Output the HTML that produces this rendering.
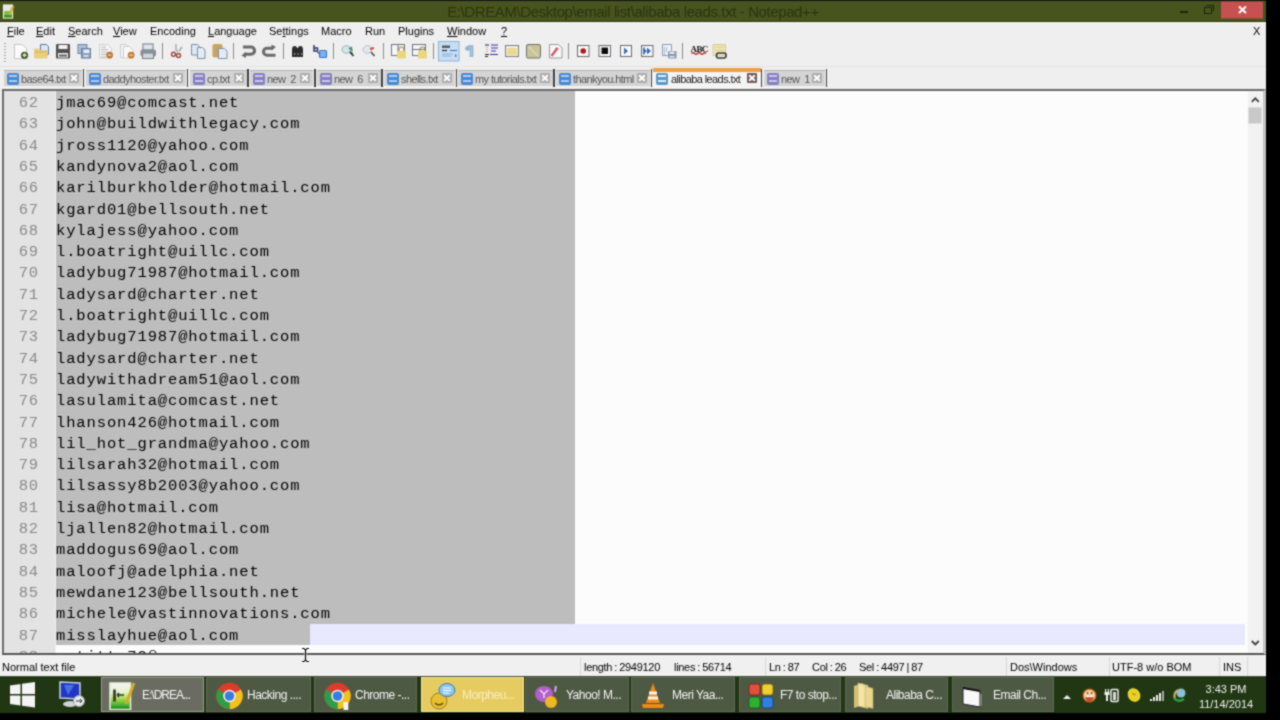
<!DOCTYPE html>
<html><head><meta charset="utf-8">
<style>
*{margin:0;padding:0;box-sizing:border-box}
html,body{width:1280px;height:720px;overflow:hidden;background:#000;font-family:"Liberation Sans",sans-serif}
.a{position:absolute}
#win{position:absolute;left:0;top:0;width:1266px;height:676px;background:#efefef;overflow:hidden}
#title{left:0;top:0;width:1266px;height:23px;background:#48541d;border-top:1px solid #151515;border-bottom:1px solid #f2f6e6;box-shadow:inset 0 -1px 0 #2e3612}
#ttext{left:0;top:2px;width:1266px;text-align:center;color:#2c3210;font-size:15px;letter-spacing:-0.4px}
#menu{left:0;top:22px;width:1266px;height:19px;font-size:11px;color:#000}
#menu span{position:absolute;top:3px}
#menu u{text-decoration:underline}
#tabs{left:0;top:0;width:1266px;height:90px}
.tab{position:absolute;top:70px;height:16px;background:#d4d4d4;border-top:1px solid #b4b4b4;font-size:11px;color:#555;letter-spacing:-0.6px}
.tab.act{top:68px;height:20px;background:#f4f4f4;border-top:4px solid #f0a040;color:#111}
.sep{position:absolute;top:69px;width:1.5px;height:18px;background:#404040}
.tab .ic{position:absolute;left:3px;top:2px;width:12px;height:12px;border-radius:2px;background:#4a88d0}
.tab .ic:before{content:"";position:absolute;left:2px;top:2px;width:8px;height:2px;background:#a9cdf4}
.tab .ic:after{content:"";position:absolute;left:2px;top:7px;width:8px;height:2px;background:#a9cdf4}
.tab .ic.p{background:#8680c0}
.tab .ic.p:before,.tab .ic.p:after{background:#c9c6ec}
.tab.act .ic{background:#5a98c8;top:1px}
.tab.act .ic:before,.tab.act .ic:after{background:#e0eef8}
.tab .tx{position:absolute;left:17px;top:2px;white-space:pre}
.tab.act .tx{top:1px;left:18px;color:#1a1a1a}
.tab .cl{position:absolute;right:3px;top:2px;width:10px;height:10px;background:#acacac;border-radius:1px}
.tab .cl:before,.tab .cl:after{content:"";position:absolute;left:4px;top:1px;width:2px;height:8px;background:#fff;transform:rotate(45deg)}
.tab .cl:after{transform:rotate(-45deg)}
.tab.act .cl{background:#6e5a5a;top:1px;right:4px}
#ed{left:2px;top:89px;width:1264px;height:566px;border-top:2px solid #6a6a6a;border-left:2px solid #6a6a6a;border-bottom:2px solid #555;border-right:3px solid #c4c4c4;background:#fdfcfd;overflow:hidden}
#gut{left:0;top:0;width:52px;height:562px;background:#e3e3e3;border-right:1px solid #f0f0f0}
#sel{left:52px;top:0;width:519px;height:533px;background:#bdbdbd}
#cur{left:52px;top:533px;width:1189px;height:21px;background:#e8e8ff}
#sel2{left:52px;top:533px;width:254px;height:21px;background:#bdbdbd}
#lines{left:0;top:2px;font-family:"Liberation Mono",monospace;font-size:15.5px;letter-spacing:0.88px;line-height:21.3px;white-space:pre}
.ln{position:absolute;left:0;width:35px;text-align:right;color:#8a8a8a}
.lt{position:absolute;left:52px;color:#000}
#sb{left:1243px;top:0;width:16px;height:562px;background:#f2f2f2;border-left:1px solid #fafafa}
#status{left:0;top:655px;width:1266px;height:21px;font-size:11px;color:#000;background:#f0f0f0}
#status span{position:absolute;top:6px;white-space:nowrap}
#status span.w{word-spacing:-0.6px;letter-spacing:-0.3px}
.ssep{position:absolute;top:2px;width:1px;height:19px;background:#d8d8d8}
#task{left:0;top:676px;width:1266px;height:37px;background:#213713;border-top:1px solid #3e4c34}
.ti{position:absolute;top:0px;width:104px;height:35px;background:#4a5240;border:1px solid #646b58;color:#eee;font-size:12px}
.ti span{position:absolute;left:40px;top:10px;white-space:nowrap;letter-spacing:-0.5px}
#root{position:absolute;left:0;top:0;width:1280px;height:720px;background:#000;filter:url(#soft)}
</style></head><body><svg width="0" height="0" style="position:absolute"><filter id="soft" x="0" y="0" width="100%" height="100%" color-interpolation-filters="sRGB"><feConvolveMatrix order="3" kernelMatrix="1 2 1 2 8 2 1 2 1" divisor="20" edgeMode="duplicate"/></filter></svg><div id="root">
<div id="win">
  <div id="title" class="a"><div id="ttext" class="a">E:\DREAM\Desktop\email list\alibaba leads.txt - Notepad++</div>
 <svg class="a" style="left:0;top:-1px" width="1266" height="22" viewBox="0 0 1266 22">
 <rect x="3.5" y="5" width="9" height="13" fill="#e8e4f0" stroke="#f0f4d8" stroke-width="1.2"/><rect x="4.2" y="11" width="7.6" height="6.4" fill="#70c048"/><rect x="4.2" y="15" width="7.6" height="2.4" fill="#3a8a20"/><path d="M9 15l4.5-9" stroke="#c8b030" stroke-width="2.2"/>
 <rect x="1180" y="11" width="8" height="2" fill="#1c2606"/>
 <rect x="1204.5" y="7.5" width="7" height="6" fill="none" stroke="#1c2606"/><path d="M1206.5 5.5h7v6" fill="none" stroke="#1c2606"/>
 <rect x="1221" y="1.5" width="42" height="17" fill="#c75050"/>
 <path d="M1239 6.5l7 6.5M1246 6.5l-7 6.5" stroke="#fff" stroke-width="2"/>
 </svg></div>
  <div id="menu" class="a">
    <span style="left:7px"><u>F</u>ile</span>
    <span style="left:36px"><u>E</u>dit</span>
    <span style="left:68px"><u>S</u>earch</span>
    <span style="left:113px"><u>V</u>iew</span>
    <span style="left:150px">Encoding</span>
    <span style="left:208px"><u>L</u>anguage</span>
    <span style="left:269px">Se<u>t</u>tings</span>
    <span style="left:321px">Macro</span>
    <span style="left:365px">Run</span>
    <span style="left:398px">Plugins</span>
    <span style="left:447px"><u>W</u>indow</span>
    <span style="left:501px"><u>?</u></span>
    <span style="left:1253px">X</span>
  </div>
  <svg class="a" style="left:0;top:0" width="760" height="64" viewBox="0 0 760 64">
<g fill="#a8a8a8"><rect x="4" y="43" width="2" height="1"/><rect x="4" y="46" width="2" height="1"/><rect x="4" y="49" width="2" height="1"/><rect x="4" y="52" width="2" height="1"/><rect x="4" y="55" width="2" height="1"/><rect x="4" y="58" width="2" height="1"/><rect x="4" y="61" width="2" height="1"/></g>
<rect x="162" y="43" width="1" height="16" fill="#8c8c8c"/><rect x="233" y="43" width="1" height="16" fill="#8c8c8c"/><rect x="283" y="43" width="1" height="16" fill="#8c8c8c"/><rect x="333" y="43" width="1" height="16" fill="#8c8c8c"/><rect x="383" y="43" width="1" height="16" fill="#8c8c8c"/><rect x="433" y="43" width="1" height="16" fill="#8c8c8c"/><rect x="568" y="43" width="1" height="16" fill="#8c8c8c"/><rect x="682" y="43" width="1" height="16" fill="#8c8c8c"/>
<!-- new -->
<path d="M14.5 44.5h8l4 4v10h-12z" fill="#fbfbfb" stroke="#c4c4c4"/>
<circle cx="24.5" cy="55.3" r="3.6" fill="#3c5a2c"/><path d="M24.5 53.3v4M22.5 55.3h4" stroke="#d9f0c0" stroke-width="1.4"/>
<!-- open -->
<path d="M40.5 44.5h6l2 2v8h-8z" fill="#dce6f4" stroke="#5a78a8"/>
<path d="M34 48.5h5l1 1.5h7.5v8.5h-13.5z" fill="#e7cf7c"/>
<path d="M35 52h12" stroke="#cdb060"/>
<!-- save -->
<rect x="56" y="44" width="14" height="14.5" rx="1" fill="#505050"/>
<rect x="58.5" y="45" width="9" height="4" fill="#f2f2f2"/>
<rect x="58" y="53" width="10" height="4.5" fill="#f0f0f0"/><rect x="59" y="54.5" width="8" height="2" fill="#606060"/>
<!-- save all -->
<rect x="78" y="44.5" width="9" height="9" fill="#a8c0d8" stroke="#6a88a8"/>
<rect x="81.5" y="48.5" width="9" height="9.5" fill="#86a2c0" stroke="#687e98"/>
<rect x="83.5" y="49.5" width="6" height="3.5" fill="#e6eef6"/><rect x="83.5" y="55" width="5" height="2" fill="#d4dde8"/>
<!-- close -->
<path d="M99.5 44.5h8l4 4v9.5h-12z" fill="#f6f6f6" stroke="#cfcfcf"/>
<path d="M101 47h5M101 49.5h7M101 52h6M101 54.5h5M101 57h5" stroke="#a8a8a8" stroke-width="0.8"/>
<circle cx="109.6" cy="55.1" r="3.4" fill="#b8732c"/><path d="M107.8 55.1h3.6" stroke="#f4d8b0" stroke-width="1.3"/>
<!-- close all -->
<path d="M120.5 44.5h6l2 2v11h-8z" fill="#f4f4f4" stroke="#cdcdcd"/>
<path d="M123.5 46.5h6l4 4v7.5h-10z" fill="#f8f8f8" stroke="#cdcdcd"/>
<circle cx="131.1" cy="55.1" r="3.4" fill="#c27a30"/><path d="M129.3 55.1h3.6" stroke="#f4d8b0" stroke-width="1.3"/>
<!-- print -->
<rect x="143" y="44" width="10" height="6" fill="#dfe6ee" stroke="#707880"/>
<rect x="140.5" y="49.5" width="15.5" height="7" rx="2" fill="#8a9098"/>
<rect x="142.5" y="53" width="11" height="5.5" fill="#d0d6de" stroke="#7a8088"/>
<!-- cut -->
<path d="M176 44v6l2 2M182 47l-3 4" stroke="#a0a0a0" stroke-width="1.3" fill="none"/>
<circle cx="173.5" cy="54.3" r="2" fill="none" stroke="#a04444" stroke-width="1.4"/>
<circle cx="178.5" cy="55.5" r="2" fill="none" stroke="#a04444" stroke-width="1.4"/>
<!-- copy -->
<path d="M191.5 44.5h6l2 2v8.5h-8z" fill="#dde8f4" stroke="#7f8ea2"/>
<path d="M197.5 47.5h5l2.5 2.5v8.5h-7.5z" fill="#e2ecf6" stroke="#7f8ea2"/>
<!-- paste -->
<rect x="212.5" y="44" width="10" height="13.5" rx="2" fill="#c8a462"/>
<path d="M218.5 48.5h6l2.5 2.5v7.5h-8.5z" fill="#e2ecf6" stroke="#8090a4"/>
<!-- undo -->
<path d="M243 47.1h8a3.3 3.3 0 0 1 0 7.1h-6" stroke="#686868" stroke-width="3" fill="none"/>
<path d="M241.5 55.5l4.5-4v6.5z" fill="#686868"/>
<!-- redo -->
<path d="M273 48.2h-6a3.3 3.3 0 0 0 0 7h8.5" stroke="#6a6a6a" stroke-width="3" fill="none"/>
<path d="M276 47l-4.5-2.5v6z" fill="#6a6a6a"/>
<!-- find -->
<path d="M292 50q0-4 2.5-4t2.5 2h1q0-2 2.5-2t2.5 4v7h-11z" fill="#2a2a2a"/>
<path d="M294 54h1.2M297.5 54h1.2M301 54h1.2" stroke="#eee" stroke-width="1"/>
<!-- replace -->
<path d="M314 45v6h3.5v-3h-3" stroke="#2a3a6a" stroke-width="1.5" fill="none"/>
<rect x="319.5" y="50.5" width="7" height="7" rx="1" fill="#7ab4ec" stroke="#3a78c8" stroke-width="1.2"/>
<path d="M317 52l3 2" stroke="#2a3a6a" stroke-width="1"/>
<!-- zoom in -->
<ellipse cx="346.5" cy="49.5" rx="4.5" ry="3.8" fill="#d4e4ec" stroke="#9ab0c0"/>
<path d="M349 50.5l4 2l-1 1.5z" fill="#3a8a50"/><path d="M350 52l3.5 4" stroke="#333" stroke-width="1.8"/>
<path d="M349 49l3 -1.5M351 47l1 4" stroke="#3a8a50" stroke-width="1.6"/>
<!-- zoom out -->
<ellipse cx="367.5" cy="49.5" rx="4.5" ry="3.8" fill="#e4e8ee" stroke="#b8c0cc"/>
<path d="M370 49l4 -1" stroke="#d04a40" stroke-width="2"/><path d="M371 52l3.5 4" stroke="#555" stroke-width="1.8"/>
<!-- sync v -->
<rect x="391.5" y="44.5" width="13" height="11" fill="#f4f6fa" stroke="#6a7480"/>
<path d="M398 45v10" stroke="#6a7480"/>
<rect x="397" y="51" width="9" height="7.5" rx="1" fill="#ecd67a"/>
<path d="M399 51v-1.5a2.5 2.5 0 0 1 5 0v1.5" stroke="#a89040" fill="none" stroke-width="1.2"/>
<!-- sync h -->
<rect x="412.5" y="44.5" width="13" height="11" fill="#f4f6fa" stroke="#6a7480"/>
<path d="M413 49.5h12" stroke="#6a7480"/>
<rect x="418" y="51" width="9" height="7.5" rx="1" fill="#ecd67a"/>
<path d="M420 51v-1.5a2.5 2.5 0 0 1 5 0v1.5" stroke="#a89040" fill="none" stroke-width="1.2"/>
<!-- word wrap pressed -->
<rect x="438.5" y="41.5" width="20.5" height="19.5" fill="#c6def6" stroke="#92b4d6"/>
<rect x="442" y="45.5" width="8" height="2.5" fill="#5a5a5a"/>
<path d="M442 50.5h5" stroke="#222" stroke-width="1.2"/><path d="M450 50.5h7" stroke="#3a6aa8" stroke-width="1"/>
<path d="M442 54h11M442 56h9" stroke="#8ab0d8" stroke-width="1"/>
<path d="M455 54l2 2-2 1z" fill="#3a6aa8"/>
<!-- pilcrow -->
<path d="M468 46h4.5v11M470.5 46v11" stroke="#8cb0d0" stroke-width="1.6" fill="none"/>
<circle cx="467.5" cy="48.5" r="2.3" fill="#8cb0d0"/>
<!-- indent guide -->
<path d="M485 45h4M485 54.5h4M485 56.5h3" stroke="#222" stroke-width="1"/>
<path d="M487 47v6" stroke="#888" stroke-dasharray="1 1"/>
<path d="M491 45h7M491 48h7M491 51h5M490 54.5h8" stroke="#3030a8" stroke-width="1.2"/>
<!-- user defined -->
<rect x="505.5" y="45.5" width="13" height="11" fill="#f0f0e8" stroke="#7a7a7a"/>
<rect x="507" y="48" width="10" height="7" fill="#e8d890"/>
<!-- 30 -->
<rect x="526.5" y="44.5" width="14" height="13.5" rx="1.5" fill="#c8c498" stroke="#6e6e6e"/>
<path d="M529 47l9 9" stroke="#e0dcb8" stroke-width="1.2"/>
<!-- 31 -->
<path d="M549.5 44.5h9l3.5 3.5v10h-12.5z" fill="#f8f8f8" stroke="#9a9a9a"/>
<path d="M551.5 56l6-8" stroke="#d05868" stroke-width="2.4"/><path d="M555.5 48.5h3" stroke="#d05868" stroke-width="1.2"/>
<!-- record -->
<rect x="577.5" y="45.5" width="11.5" height="11" fill="#fafafa" stroke="#6a6a6a"/>
<circle cx="583.2" cy="51" r="2.8" fill="#b01818"/>
<!-- stop -->
<rect x="599" y="45.5" width="11.5" height="11" fill="#fafafa" stroke="#6a6a6a"/>
<rect x="601.5" y="47.5" width="6.5" height="6.5" fill="#0a0a0a"/>
<!-- play -->
<rect x="620.5" y="45.5" width="11" height="11" fill="#f6f8fc" stroke="#6a6a6a"/>
<path d="M624 47.5l4 3.5-4 3.5z" fill="#3a6ab8"/>
<!-- play multi -->
<rect x="641.5" y="45.5" width="11.5" height="11" fill="#f6f8fc" stroke="#6a6a6a"/>
<path d="M643 47.5l4 3.5-4 3.5zM647 47.5l4 3.5-4 3.5z" fill="#3a6ab8"/>
<path d="M644 47v8" stroke="#3a6ab8"/>
<!-- save macro -->
<path d="M662.5 44.5h9v11h-9z" fill="#eef2f8" stroke="#8a9cb4"/>
<path d="M664.5 47v8M666.5 47v5" stroke="#aabcd0"/>
<rect x="668" y="51" width="8.5" height="7.5" rx="1" fill="#8898ac"/>
<rect x="669.5" y="51.5" width="5" height="2.5" fill="#e0e6ee"/><rect x="669.5" y="56" width="5" height="1.5" fill="#e0e6ee"/>
<!-- ABC -->
<text x="690.5" y="51.5" font-family="Liberation Serif" font-weight="bold" font-size="9" fill="#111" letter-spacing="-0.6">ABC</text>
<path d="M691.5 53.5q1.5 -1.5 3 0t3 0t3 0t3 0t2.5 0" stroke="#c03838" stroke-width="1.5" fill="none"/>
<!-- last -->
<path d="M713 44.5h12.5v11h-12.5z" fill="#f0e8b8" stroke="#c8c090" stroke-width="0.8"/>
<path d="M714.5 47h10M714.5 50h10" stroke="#d8cc88"/>
<rect x="716.5" y="53" width="9.5" height="5" rx="2" fill="none" stroke="#303830" stroke-width="1.6"/>
</svg>
  <div id="tabs" class="a">
<div class="a" style="left:0;top:66px;width:1266px;height:1px;background:#e4e4e4"></div>
<div class="tab" style="left:4px;width:78.00px"><div class="ic "></div><div class="tx">base64.txt</div><div class="cl"></div></div>
<div class="sep" style="left:82.75px"></div>
<div class="tab" style="left:86px;width:100.20px"><div class="ic "></div><div class="tx">daddyhoster.txt</div><div class="cl"></div></div>
<div class="sep" style="left:186.95px"></div>
<div class="tab" style="left:190px;width:56.50px"><div class="ic p"></div><div class="tx">cp.txt</div><div class="cl"></div></div>
<div class="sep" style="left:247.25px"></div>
<div class="tab" style="left:250px;width:63.30px"><div class="ic p"></div><div class="tx">new  2</div><div class="cl"></div></div>
<div class="sep" style="left:314.05px"></div>
<div class="tab" style="left:317px;width:63.50px"><div class="ic p"></div><div class="tx">new  6</div><div class="cl"></div></div>
<div class="sep" style="left:381.25px"></div>
<div class="tab" style="left:384px;width:70.80px"><div class="ic "></div><div class="tx">shells.txt</div><div class="cl"></div></div>
<div class="sep" style="left:455.55px"></div>
<div class="tab" style="left:458px;width:94.50px"><div class="ic "></div><div class="tx">my tutorials.txt</div><div class="cl"></div></div>
<div class="sep" style="left:553.25px"></div>
<div class="tab" style="left:556px;width:94.00px"><div class="ic "></div><div class="tx">thankyou.html</div><div class="cl"></div></div>
<div class="sep" style="left:650.75px"></div>
<div class="tab act" style="left:653px;width:107.75px"><div class="ic g"></div><div class="tx">alibaba leads.txt</div><div class="cl"></div></div>
<div class="sep" style="left:760.75px"></div>
<div class="tab" style="left:764px;width:61.20px"><div class="ic p"></div><div class="tx">new  1</div><div class="cl"></div></div>
<div class="sep" style="left:825.95px"></div>
  </div>
</div>
<div id="ed" class="a">
  <div id="gut" class="a"></div>
  <div id="sel" class="a"></div>
  <div id="cur" class="a"></div>
  <div id="sel2" class="a"></div>
  <div id="lines" class="a">
<div class="ln" style="top:0.00px">62</div><div class="lt" style="top:0.00px">jmac69@comcast.net</div>
<div class="ln" style="top:21.30px">63</div><div class="lt" style="top:21.30px">john@buildwithlegacy.com</div>
<div class="ln" style="top:42.60px">64</div><div class="lt" style="top:42.60px">jross1120@yahoo.com</div>
<div class="ln" style="top:63.90px">65</div><div class="lt" style="top:63.90px">kandynova2@aol.com</div>
<div class="ln" style="top:85.20px">66</div><div class="lt" style="top:85.20px">karilburkholder@hotmail.com</div>
<div class="ln" style="top:106.50px">67</div><div class="lt" style="top:106.50px">kgard01@bellsouth.net</div>
<div class="ln" style="top:127.80px">68</div><div class="lt" style="top:127.80px">kylajess@yahoo.com</div>
<div class="ln" style="top:149.10px">69</div><div class="lt" style="top:149.10px">l.boatright@uillc.com</div>
<div class="ln" style="top:170.40px">70</div><div class="lt" style="top:170.40px">ladybug71987@hotmail.com</div>
<div class="ln" style="top:191.70px">71</div><div class="lt" style="top:191.70px">ladysard@charter.net</div>
<div class="ln" style="top:213.00px">72</div><div class="lt" style="top:213.00px">l.boatright@uillc.com</div>
<div class="ln" style="top:234.30px">73</div><div class="lt" style="top:234.30px">ladybug71987@hotmail.com</div>
<div class="ln" style="top:255.60px">74</div><div class="lt" style="top:255.60px">ladysard@charter.net</div>
<div class="ln" style="top:276.90px">75</div><div class="lt" style="top:276.90px">ladywithadream51@aol.com</div>
<div class="ln" style="top:298.20px">76</div><div class="lt" style="top:298.20px">lasulamita@comcast.net</div>
<div class="ln" style="top:319.50px">77</div><div class="lt" style="top:319.50px">lhanson426@hotmail.com</div>
<div class="ln" style="top:340.80px">78</div><div class="lt" style="top:340.80px">lil_hot_grandma@yahoo.com</div>
<div class="ln" style="top:362.10px">79</div><div class="lt" style="top:362.10px">lilsarah32@hotmail.com</div>
<div class="ln" style="top:383.40px">80</div><div class="lt" style="top:383.40px">lilsassy8b2003@yahoo.com</div>
<div class="ln" style="top:404.70px">81</div><div class="lt" style="top:404.70px">lisa@hotmail.com</div>
<div class="ln" style="top:426.00px">82</div><div class="lt" style="top:426.00px">ljallen82@hotmail.com</div>
<div class="ln" style="top:447.30px">83</div><div class="lt" style="top:447.30px">maddogus69@aol.com</div>
<div class="ln" style="top:468.60px">84</div><div class="lt" style="top:468.60px">maloofj@adelphia.net</div>
<div class="ln" style="top:489.90px">85</div><div class="lt" style="top:489.90px">mewdane123@bellsouth.net</div>
<div class="ln" style="top:511.20px">86</div><div class="lt" style="top:511.20px">michele@vastinnovations.com</div>
<div class="ln" style="top:532.50px">87</div><div class="lt" style="top:532.50px">misslayhue@aol.com</div>
<div class="ln" style="top:553.80px">88</div><div class="lt" style="top:553.80px">motitty72@msn.com</div>
  </div>
  <div id="sb" class="a"><svg class="a" style="left:0;top:0" width="16" height="562" viewBox="0 0 16 562"><path d="M3.8 10.8l3.5-3.5 3.5 3.5" stroke="#404040" stroke-width="1.8" fill="none"/><rect x="0.5" y="16.5" width="13" height="16" fill="#c8c8c8"/><path d="M3.8 550l3.5 3.5 3.5-3.5" stroke="#404040" stroke-width="1.8" fill="none"/></svg></div>
</div>
<div id="status" class="a">
  <span style="left:2px">Normal text file</span>
  <div class="ssep" style="left:580px"></div>
  <span class="w" style="left:584px">length : 2949120</span>
  <span class="w" style="left:674px">lines : 56714</span>
  <div class="ssep" style="left:765px"></div>
  <span class="w" style="left:769px">Ln : 87</span>
  <span class="w" style="left:812px">Col : 26</span>
  <span class="w" style="left:859px">Sel : 4497 | 87</span>
  <div class="ssep" style="left:1006px"></div>
  <span style="left:1010px">Dos\Windows</span>
  <div class="ssep" style="left:1109px"></div>
  <span style="left:1112px">UTF-8 w/o BOM</span>
  <div class="ssep" style="left:1219px"></div>
  <span style="left:1223px">INS</span>
  <div class="ssep" style="left:1247px"></div>
</div>
<div id="task" class="a">
<svg class="a" style="left:0;top:-1px" width="100" height="37" viewBox="0 0 100 37">
<path d="M10 9.5l10.5-1.5v10h-10.5z" fill="#f4f4f4"/><path d="M22 7.8l13-1.8v12h-13z" fill="#f4f4f4"/>
<path d="M10 19.5h10.5v10l-10.5-1.5z" fill="#f4f4f4"/><path d="M22 19.5h13v12l-13-1.8z" fill="#f4f4f4"/>
<path d="M60 6l20 1v16l-20-1z" fill="#2038c0" stroke="#c8d0e8" stroke-width="1.5"/><path d="M64 9l10 0l-6 10z" fill="#4a70e8"/>
<ellipse cx="70" cy="28" rx="7" ry="3" fill="#d0d4d8"/><circle cx="79" cy="25" r="5.5" fill="#e8eaec" stroke="#9aa0a6"/><path d="M76 25h6M80 23l2 2-2 2" stroke="#333" fill="none" stroke-width="1"/>
</svg>
<div class="ti" style="left:101px;width:103px;background:#6a6c62;border-color:#9a9c90;color:#f4f4f4"><svg class="a" style="left:6px;top:2px" width="30" height="30" viewBox="0 0 30 30"><defs><linearGradient id="npg" x1="0" y1="0" x2="0" y2="1"><stop offset="0" stop-color="#f4f4f4"/><stop offset="0.35" stop-color="#e8f0d0"/><stop offset="0.6" stop-color="#a8d848"/><stop offset="0.85" stop-color="#40b030"/><stop offset="1" stop-color="#107010"/></linearGradient></defs><rect x="2" y="3" width="20.5" height="26.5" fill="url(#npg)" stroke="#e4ecd8" stroke-width="1.6"/><path d="M6.5 9.5v12" stroke="#303030" stroke-width="2.6"/><path d="M9 15h7M9 15l2-2M9 15l2 2" stroke="#303030" stroke-width="1.3" fill="none"/><path d="M26 3l-8 21" stroke="#d0b020" stroke-width="3"/></svg><span style="letter-spacing:-1px">E:\DREA...</span></div>
<div class="ti" style="left:206px;width:105px;background:#4e5944;border-color:#5e6854;color:#f4f4f4"><svg class="a" style="left:6px;top:2px" width="30" height="30" viewBox="0 0 30 30"><g transform="translate(16.5 16) scale(1.2) translate(-15 -16)"><circle cx="15" cy="16" r="11" fill="#dd3b2b"/><path d="M15 16L24.53 10.5A11 11 0 0 1 15 27Z" fill="#f2c21a"/><path d="M15 16L15 27A11 11 0 0 1 5.47 10.5Z" fill="#2f9d46"/><circle cx="15" cy="16" r="5.2" fill="#f4f4f4"/><circle cx="15" cy="16" r="4" fill="#3b7be0"/></g></svg><span>Hacking ....</span></div>
<div class="ti" style="left:314px;width:103px;background:#4e5944;border-color:#5e6854;color:#f4f4f4"><svg class="a" style="left:6px;top:2px" width="30" height="30" viewBox="0 0 30 30"><g transform="translate(16.5 16) scale(1.2) translate(-15 -16)"><circle cx="15" cy="16" r="11" fill="#dd3b2b"/><path d="M15 16L24.53 10.5A11 11 0 0 1 15 27Z" fill="#f2c21a"/><path d="M15 16L15 27A11 11 0 0 1 5.47 10.5Z" fill="#2f9d46"/><circle cx="15" cy="16" r="5.2" fill="#f4f4f4"/><circle cx="15" cy="16" r="4" fill="#3b7be0"/><path d="M20 21h4v8h-4z" fill="#f4f4f4"/></g></svg><span>Chrome -...</span></div>
<div class="ti" style="left:421px;width:103px;background:#e6cc60;border-color:#f4e8a0;color:#f8eec0"><svg class="a" style="left:6px;top:2px" width="30" height="30" viewBox="0 0 30 30"><circle cx="11" cy="21" r="8" fill="#e8c030" stroke="#a08020"/><path d="M7 23q4 4 8 0" stroke="#604010" fill="none" stroke-width="1.2"/><ellipse cx="19" cy="10" rx="8" ry="6.5" fill="#8cc8f0" stroke="#3a78b0"/><path d="M15 8h8M15 10.5h8M15 13h6" stroke="#fff" stroke-width="1"/></svg><span>Morpheu...</span></div>
<div class="ti" style="left:525px;width:104px;background:#4e5944;border-color:#5e6854;color:#f4f4f4"><svg class="a" style="left:6px;top:2px" width="30" height="30" viewBox="0 0 30 30"><ellipse cx="12" cy="14" rx="9" ry="8" fill="#b060c8"/><path d="M8 10l4 4 4-4M12 14v4" stroke="#f0d8f8" stroke-width="1.4" fill="none"/><circle cx="19" cy="22" r="6" fill="#f0b820"/><path d="M24 6l-1 6" stroke="#d8a8f0" stroke-width="2"/></svg><span>Yahoo! M...</span></div>
<div class="ti" style="left:631px;width:104px;background:#4e5944;border-color:#5e6854;color:#f4f4f4"><svg class="a" style="left:6px;top:2px" width="30" height="30" viewBox="0 0 30 30"><path d="M15 3l-7 20h14z" fill="#f08a10"/><path d="M11 13h8M10 18h10" stroke="#f4f4f4" stroke-width="3"/><path d="M4 24h22l-1 4H5z" fill="#f08a10"/></svg><span>Meri Yaa...</span></div>
<div class="ti" style="left:739px;width:102px;background:#4e5944;border-color:#5e6854;color:#f4f4f4"><svg class="a" style="left:6px;top:2px" width="30" height="30" viewBox="0 0 30 30"><rect x="3" y="4" width="11" height="11" rx="2.5" fill="#e05040" stroke="#802010" stroke-width="0.8"/><rect x="16" y="4" width="11" height="11" rx="2.5" fill="#f0d030" stroke="#806010" stroke-width="0.8"/><rect x="3" y="17" width="11" height="11" rx="2.5" fill="#30b030" stroke="#106010" stroke-width="0.8"/><rect x="16" y="17" width="11" height="11" rx="2.5" fill="#3080e0" stroke="#104080" stroke-width="0.8"/></svg><span>F7 to stop...</span></div>
<div class="ti" style="left:845px;width:103px;background:#4e5944;border-color:#5e6854;color:#f4f4f4"><svg class="a" style="left:6px;top:2px" width="30" height="30" viewBox="0 0 30 30"><path d="M2 6l9-3v22l-9 3z" fill="#d8c070"/><path d="M6 3l10 2.5v23l-10-2.5z" fill="#f4e4a8" stroke="#c8b070" stroke-width="0.6"/><path d="M13 6l8 2.5v20l-8-2z" fill="#ead690" stroke="#c0a860" stroke-width="0.6"/></svg><span>Alibaba C...</span></div>
<div class="ti" style="left:952px;width:102px;background:#4e5944;border-color:#5e6854;color:#f4f4f4"><svg class="a" style="left:6px;top:2px" width="30" height="30" viewBox="0 0 30 30"><path d="M4 8l17 3v16l-17-3z" fill="#f8f8f8" stroke="#202020" stroke-width="1"/><path d="M4 8l17 3" stroke="#101010" stroke-width="2.2"/><path d="M22 14v12" stroke="#8a9080" stroke-width="1.5"/></svg><span>Email Ch...</span></div>
<svg class="a" style="left:1055px;top:-1px" width="211" height="37" viewBox="1055 676 211 37">
<path d="M1063 699l4-4 4 4z" fill="#f0f0f0"/>
<circle cx="1089.5" cy="695.5" r="6.3" fill="#f2d0a0" stroke="#c86818" stroke-width="1.2"/><path d="M1085 696.5h9q-1 5-4.5 5t-4.5-5z" fill="#c84a30"/><path d="M1085.5 696.5h8" stroke="#fff" stroke-width="1.3"/><path d="M1087 693h1.2M1091 693h1.2" stroke="#402000" stroke-width="1.4"/>
<path d="M1106 692h2v9h-2zM1105 689h1.2v4h-1.2zM1107.8 689h1.2v4h-1.2zM1104.5 692h5v3h-5z" fill="#f0f0f0"/><rect x="1111" y="689.5" width="7" height="12" rx="1" fill="none" stroke="#f0f0f0" stroke-width="1.5"/><rect x="1113" y="692" width="3" height="8" fill="#d8d8d8"/>
<ellipse cx="1134" cy="695" rx="5.5" ry="6.5" fill="#e8d020" stroke="#f4e040" transform="rotate(-35 1134 695)"/><path d="M1132 693q2 3 4 1" stroke="#a08010" fill="none"/>
<path d="M1150 701h2v-2h-2zM1153 701h2v-4h-2zM1156 701h2v-6h-2zM1159 701h2v-8h-2z" fill="#f0f0f0"/><path d="M1162 701h2v-10h-2z" fill="#a8a8a8"/>
<circle cx="1181" cy="693" r="4.5" fill="#8cc0d8"/><path d="M1175 699q-2-6 3-9" stroke="#c8b060" stroke-width="2.2" fill="none"/><path d="M1174 698q4 5 10 1" stroke="#30a040" stroke-width="2.4" fill="none"/>
<text x="1226" y="692.5" text-anchor="middle" font-family="Liberation Sans" font-size="11" fill="#f0f0f0">3:43 PM</text>
<text x="1226" y="708" text-anchor="middle" font-family="Liberation Sans" font-size="11" fill="#f0f0f0">11/14/2014</text>
</svg>
</div>
<svg class="a" style="left:298px;top:644px" width="16" height="22" viewBox="298 644 16 22"><path d="M302 648.5h2.5M306.5 648.5h2.5M302 661.5h2.5M306.5 661.5h2.5M305.5 649v12" stroke="#fff" stroke-width="3" opacity="0.6"/><path d="M302 648.5h2.5M306.5 648.5h2.5M302 661.5h2.5M306.5 661.5h2.5M305.5 649v12" stroke="#000" stroke-width="1.2"/><path d="M304 649q1.5 0 1.5 1.5M307 649q-1.5 0-1.5 1.5M304 661q1.5 0 1.5-1.5M307 661q-1.5 0-1.5-1.5" stroke="#000" fill="none" stroke-width="1"/></svg>
</div></body></html>
